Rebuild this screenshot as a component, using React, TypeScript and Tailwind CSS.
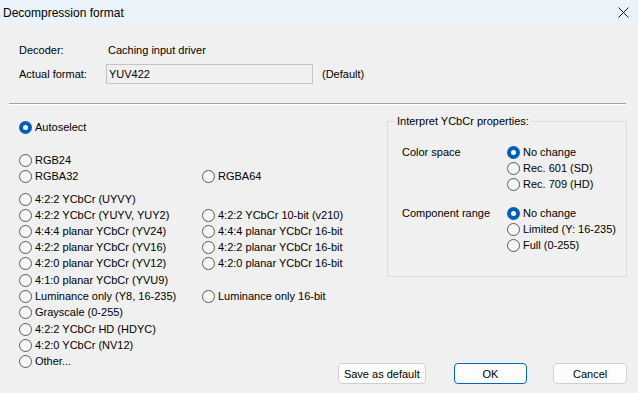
import React from "react";

type Opt = { label: string; checked?: boolean };

function Radio({ label, checked }: Opt) {
  return (
    <div className="flex h-4 items-center gap-[3px] whitespace-nowrap">
      {checked ? (
        <span className="flex h-[13px] w-[13px] shrink-0 items-center justify-center rounded-full bg-[#005fb8]">
          <span className="h-[5px] w-[5px] rounded-full bg-white" />
        </span>
      ) : (
        <span className="h-[13px] w-[13px] shrink-0 rounded-full border border-[#5a5a5a] bg-[#f6f6f6]" />
      )}
      <span>{label}</span>
    </div>
  );
}

// left column rows: [col1, col2?, extra top margin]
const formatRows: { a: string; b?: string; mt?: string }[] = [
  { a: "4:2:2 YCbCr (UYVY)", mt: "mt-[7px]" },
  { a: "4:2:2 YCbCr (YUYV, YUY2)", b: "4:2:2 YCbCr 10-bit (v210)" },
  { a: "4:4:4 planar YCbCr (YV24)", b: "4:4:4 planar YCbCr 16-bit" },
  { a: "4:2:2 planar YCbCr (YV16)", b: "4:2:2 planar YCbCr 16-bit" },
  { a: "4:2:0 planar YCbCr (YV12)", b: "4:2:0 planar YCbCr 16-bit" },
  { a: "4:1:0 planar YCbCr (YVU9)", mt: "mt-[1px]" },
  { a: "Luminance only (Y8, 16-235)", b: "Luminance only 16-bit" },
  { a: "Grayscale (0-255)" },
  { a: "4:2:2 YCbCr HD (HDYC)", mt: "mt-[1px]" },
  { a: "4:2:0 YCbCr (NV12)" },
  { a: "Other..." },
];

function Button({ children, primary, w }: { children: React.ReactNode; primary?: boolean; w: string }) {
  return (
    <button
      className={`flex h-[21px] ${w} items-center justify-center rounded-[4px] border bg-[#fdfdfd] text-[11px] text-black ${
        primary ? "border-[#0067c0]" : "border-[#d0d0d0]"
      }`}
    >
      {children}
    </button>
  );
}

export default function App() {
  return (
    <div
      className="flex h-[393px] w-[638px] flex-col overflow-hidden bg-[#f0f0f0] text-[11px] leading-4 text-black"
      style={{ fontFamily: '"Liberation Sans", Arial, sans-serif' }}
    >
      {/* Title bar */}
      <div className="flex h-[25px] shrink-0 items-center justify-between bg-[#eaf3f9] pl-[3px] pr-[9px]">
        <span className="text-[12px]">Decompression format</span>
        <svg width="11" height="11" viewBox="0 0 11 11" className="text-[#1a1a1a]">
          <path d="M0.5 0.5 L10.5 10.5 M10.5 0.5 L0.5 10.5" stroke="currentColor" strokeWidth="1" />
        </svg>
      </div>

      {/* Decoder info */}
      <div className="flex flex-col pl-[19px] pt-[17px]">
        <div className="flex h-4 items-center">
          <span className="w-[89px]">Decoder:</span>
          <span>Caching input driver</span>
        </div>
        <div className="mt-[6px] flex h-5 items-center">
          <span className="w-[87px]">Actual format:</span>
          <div className="flex h-5 w-[207px] items-center border border-[#c4c4c4] bg-[#f0f0f0] pl-[2px]">YUV422</div>
          <span className="ml-[9px]">(Default)</span>
        </div>
      </div>

      {/* Separator */}
      <div className="ml-[9px] mt-[19px] w-[617px] border-t border-b border-t-[#a0a0a0] border-b-white" />

      {/* Main */}
      <div className="flex flex-1">
        <div className="flex w-[338px] shrink-0 flex-col pl-[19px] pt-[14px]">
          <Radio label="Autoselect" checked />
          <div className="mt-[17px]">
            <Radio label="RGB24" />
          </div>
          <div className="flex">
            <div className="w-[183px] shrink-0">
              <Radio label="RGBA32" />
            </div>
            <Radio label="RGBA64" />
          </div>
          {formatRows.map((r) => (
            <div key={r.a} className={`flex ${r.mt ?? ""}`}>
              <div className="w-[183px] shrink-0">
                <Radio label={r.a} />
              </div>
              {r.b && <Radio label={r.b} />}
            </div>
          ))}
        </div>

        <div className="flex w-[289px] shrink-0 flex-col pb-[9px]">
          <fieldset className="ml-auto mt-[9px] w-[240px] min-w-0 border border-[#dcdcdc] px-[14px] pb-[23px] pt-[16px]">
            <legend className="ml-[-7px] px-[2px] leading-[14px]">Interpret YCbCr properties:</legend>
            <div className="flex">
              <span className="h-4 w-[105px] shrink-0 leading-4">Color space</span>
              <div className="flex flex-col">
                <Radio label="No change" checked />
                <Radio label="Rec. 601 (SD)" />
                <Radio label="Rec. 709 (HD)" />
              </div>
            </div>
            <div className="mt-[13px] flex">
              <span className="h-4 w-[105px] shrink-0 leading-4">Component range</span>
              <div className="flex flex-col">
                <Radio label="No change" checked />
                <Radio label="Limited (Y: 16-235)" />
                <Radio label="Full (0-255)" />
              </div>
            </div>
          </fieldset>

          <div className="mt-auto flex">
            <Button w="w-[88px]">Save as default</Button>
            <Button w="w-[74px] ml-[28px]" primary>
              OK
            </Button>
            <Button w="w-[74px] ml-[26px]">Cancel</Button>
          </div>
        </div>
      </div>
    </div>
  );
}
